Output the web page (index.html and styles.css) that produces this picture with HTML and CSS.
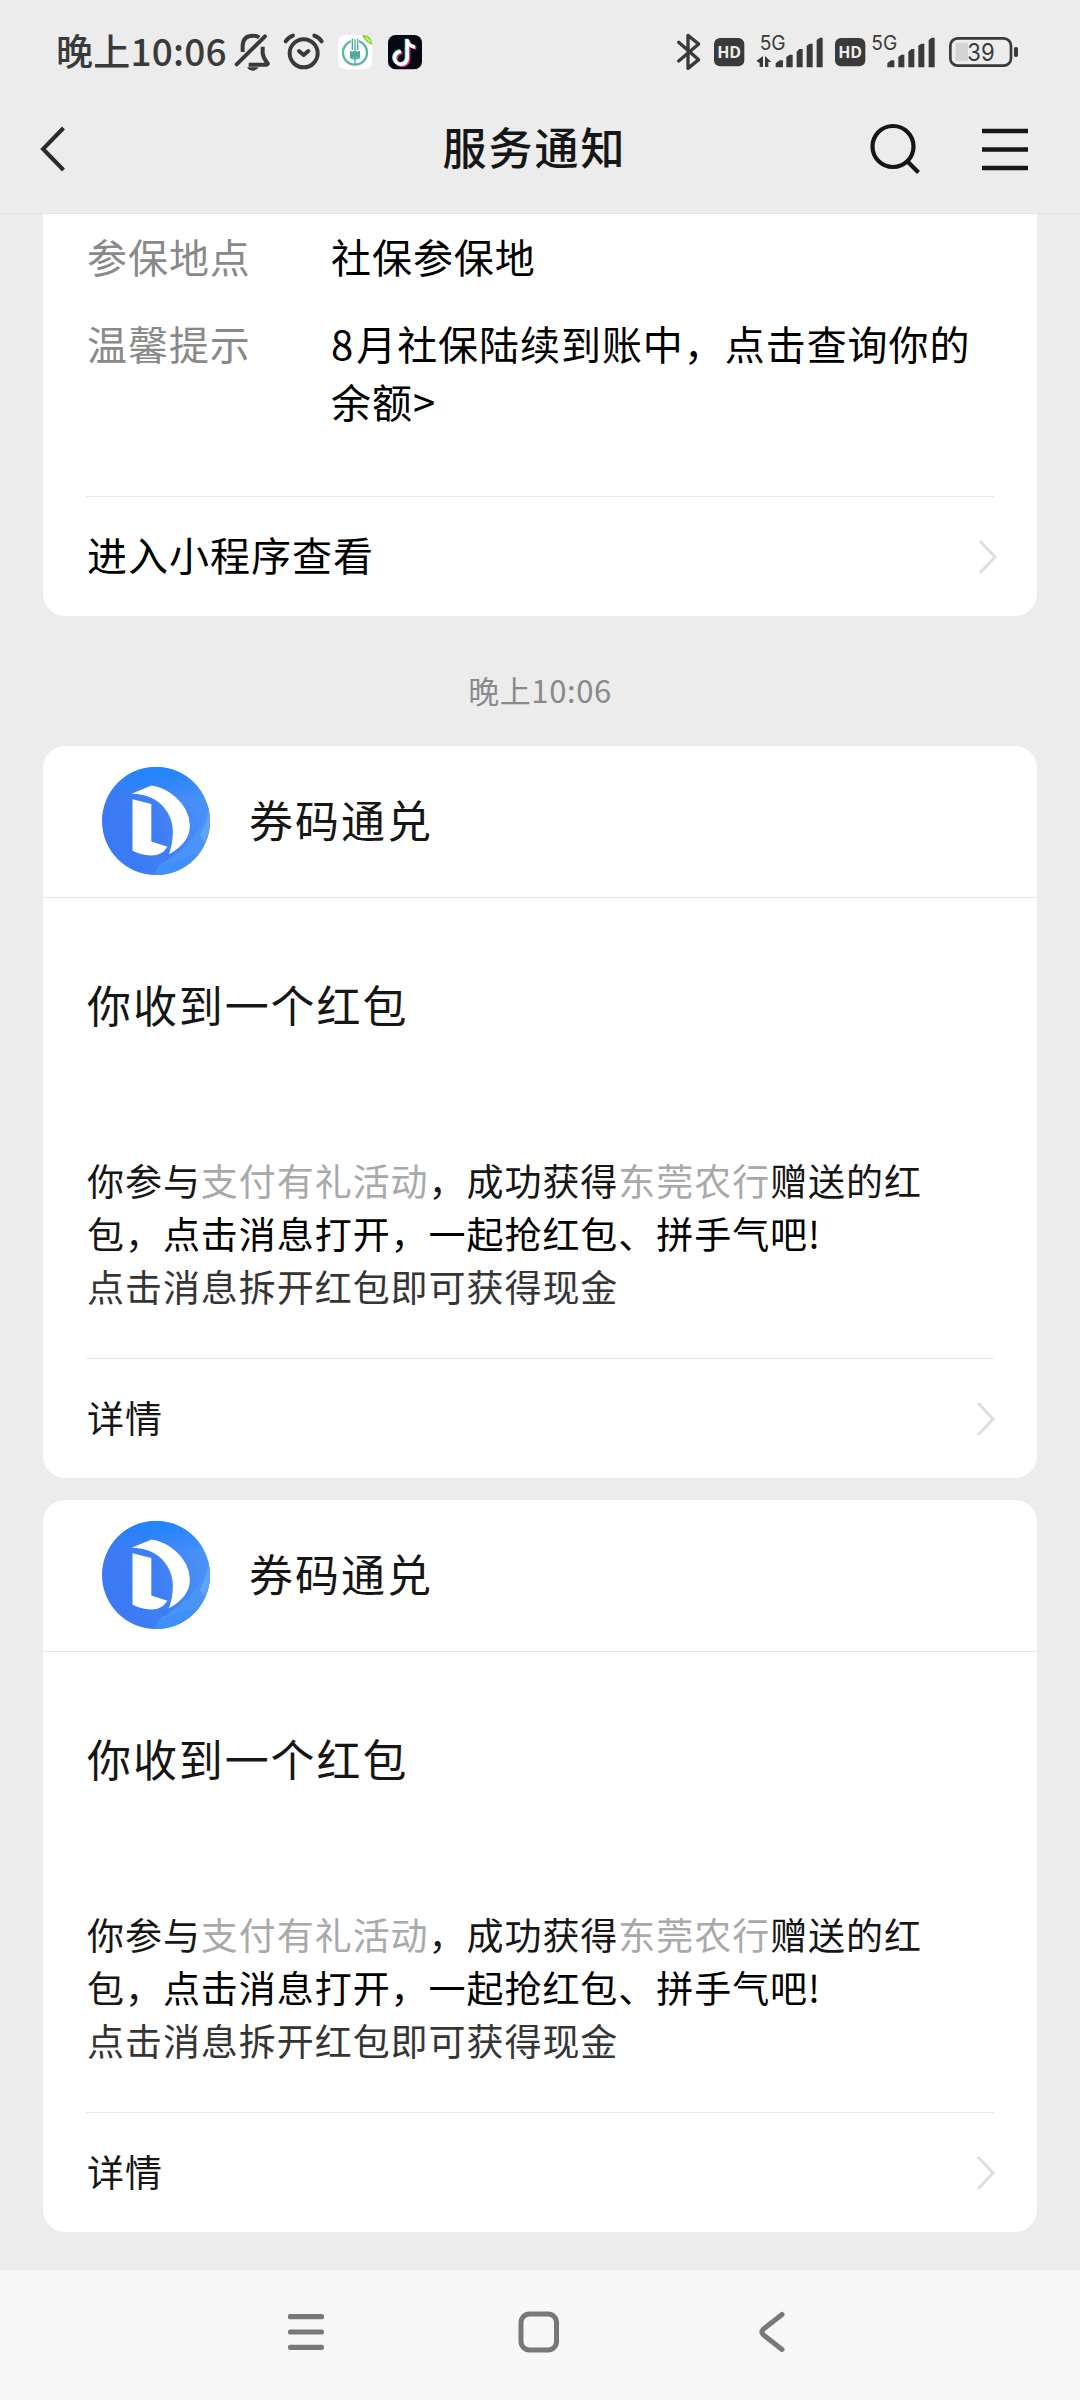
FILE: index.html
```html
<!DOCTYPE html>
<html lang="zh-CN">
<head>
<meta charset="utf-8">
<title>服务通知</title>
<link rel="stylesheet" href="styles.css">
</head>
<body>
<svg class="defs" width="0" height="0" aria-hidden="true">
  <defs>
    <linearGradient id="logo-bg" x1="0" y1="0.6" x2="1" y2="0.3">
      <stop offset="0" stop-color="#3b78f6"/><stop offset="0.5" stop-color="#3f7ff5"/><stop offset="1" stop-color="#4a94f8"/>
    </linearGradient>
    <linearGradient id="logo-top" x1="0" y1="0" x2="0" y2="1">
      <stop offset="0" stop-color="#1f85fd"/><stop offset="1" stop-color="#1f85fd" stop-opacity="0"/>
    </linearGradient>
    <clipPath id="logo-clip"><circle cx="197" cy="197" r="161"/></clipPath>
    <symbol id="logo" viewBox="36 36 322 322">
      <g clip-path="url(#logo-clip)">
        <rect x="36" y="36" width="322" height="322" fill="url(#logo-bg)"/>
        <rect x="36" y="36" width="322" height="95" fill="url(#logo-top)"/>
        <path d="M358 130Q340 255 205 330L190 360H358Z" fill="#4a94f9"/>
        <path d="M358 140Q350 200 328 240L342 262L370 190Z" fill="#62a3fa"/>
        <path d="M205 330L190 360H300L330 290Q270 310 205 330Z" fill="#3a8dfc" opacity=".6"/>
      </g>
      <path d="M124 116Q186 116 222 158Q262 206 239 286L236 296Q300 260 298 208Q295 160 256 126Q225 98 184 91Z" fill="#fff"/>
      <path d="M127 132L183 146V258L231 274Q215 301 182 300Q150 298 127 286Z" fill="#fff"/>
    </symbol>
    <symbol id="chevron" viewBox="0 0 20 36">
      <path d="M2 2L17 18L2 34" fill="none" stroke="#dedede" stroke-width="3"/>
    </symbol>
  </defs>
</svg>

<header class="top">
  <div class="status">
    <span class="clock">晚上10:06</span>
    <svg class="status-left" width="200" height="52" viewBox="0 0 600 156">
      <g fill="none" stroke="#3a3a3a" stroke-width="12" stroke-linecap="round" stroke-linejoin="round">
        <path d="M20 115L105 31"/>
        <path d="M38 78V58Q40 28 70 29Q80 29 88 34" stroke-linecap="butt"/>
        <path d="M98 62V82Q100 97 112 111Q116 115 109 116H56" stroke-linecap="butt"/>
        <circle cx="221" cy="82" r="42"/>
        <path d="M207 75L221 87L235 75M167 46Q175 34 189 29M253 29Q267 34 275 46"/>
      </g>
      <path d="M51 124H86Q80 134 68 134Q57 134 51 124Z" fill="#3a3a3a"/>
      <rect x="324" y="27" width="102" height="103" rx="22" fill="#fff"/>
      <circle cx="375" cy="80" r="36" fill="none" stroke="#5ab5a8" stroke-width="7"/>
      <rect x="363" y="36" width="24" height="36" fill="#fff"/>
      <path d="M367 38V72M383 38V72M362 75V94Q364 98 375 98Q386 98 388 94V75M375 40V118" fill="none" stroke="#4bada0" stroke-width="4"/>
      <path d="M362 76H388V95H362Z" fill="#4bada0"/>
      <path d="M396 27Q425 24 427 56Q408 53 396 27Z" fill="#8fd23f"/>
      <path d="M408 35L420 47" stroke="#d9ef8b" stroke-width="5"/>
      <rect x="474" y="27" width="102" height="103" rx="23" fill="#070914"/>
      <g fill="none" stroke-width="10">
        <path d="M532 40V96A19 19 0 1 1 513 77M532 44Q536 60 555 63" stroke="#5ee7df" transform="translate(-3 -2)"/>
        <path d="M532 40V96A19 19 0 1 1 513 77M532 44Q536 60 555 63" stroke="#f0416c" transform="translate(4 3)"/>
        <path d="M532 40V96A19 19 0 1 1 513 77M532 44Q536 60 555 63" stroke="#fff"/>
      </g>
    </svg>
    <svg class="status-right" width="160" height="52" viewBox="0 0 480 156">
      <path d="M26 49L86 101L54 127V28L86 54L26 105" fill="none" stroke="#3a3a3a" stroke-width="10" stroke-linecap="round" stroke-linejoin="round"/>
      <rect x="132" y="36" width="91" height="85" rx="18" fill="#3a3a3a"/>
      <text class="hd" x="177.500" y="95" textLength="72" lengthAdjust="spacingAndGlyphs" text-anchor="middle">HD</text>
      <text class="gen" x="269" y="71" textLength="78" lengthAdjust="spacingAndGlyphs">5G</text>
      <path d="M279 90V123H269V111L259 105ZM285 123V90L304 108H295V123Z" fill="#3a3a3a"/>
      <path d="M317 124V112L329 103H339V124ZM349 124V93L359 86H368V124ZM380 124V77L388 69H398V124ZM410 124V59L419 53H428V124ZM440 124V42L450 35H458V124Z" fill="#3a3a3a"/>
    </svg>
    <svg width="200" height="52" viewBox="0 0 600 156">
      <rect x="15" y="36" width="91" height="85" rx="18" fill="#3a3a3a"/>
      <text class="hd" x="60.500" y="95" textLength="72" lengthAdjust="spacingAndGlyphs" text-anchor="middle">HD</text>
      <text class="gen" x="124" y="71" textLength="78" lengthAdjust="spacingAndGlyphs">5G</text>
      <path d="M172 124V112L183 103H193V124ZM205 124V93L214 86H223V124ZM235 124V77L244 69H253V124ZM265 124V59L274 53H283V124ZM296 124V42L305 35H314V124Z" fill="#3a3a3a"/>
      <rect x="377" y="50" width="37" height="55" rx="5" fill="#d4d4d4"/>
      <rect x="361" y="37" width="182" height="82" rx="22" fill="none" stroke="#3a3a3a" stroke-width="8"/>
      <rect x="552" y="63" width="12" height="30" rx="5" fill="#3a3a3a"/>
      <text class="pct" x="412" y="104" textLength="82" lengthAdjust="spacingAndGlyphs">39</text>
    </svg>
  </div>
  <div class="titlebar">
    <svg class="back" width="28" height="50" viewBox="0 0 28 50"><path d="M24.500 4L4 25L24.500 46" fill="none" stroke="#2b2b2b" stroke-width="4"/></svg>
    <h1>服务通知</h1>
    <svg class="tools" width="162" height="56" viewBox="868 120 162 56">
      <g fill="none" stroke="#161616" stroke-width="4.200">
        <circle cx="893" cy="146.500" r="20.500"/><path d="M907.500 161.500L918.500 172.500"/>
        <path d="M982 131H1028M982 149.500H1028M982 168H1028" stroke-width="4.500"/>
      </g>
    </svg>
  </div>
</header>

<main>
  <section class="card card-first">
    <dl class="facts">
      <dt>参保地点</dt><dd>社保参保地</dd>
      <dt>温馨提示</dt><dd><span class="num">8</span>月社保陆续到账中，点击查询你的<br>余额<span class="gt">&gt;</span></dd>
    </dl>
    <div class="more more-large"><span>进入小程序查看</span><svg width="20" height="36"><use href="#chevron"/></svg></div>
  </section>

  <time>晚上10:06</time>

  <section class="card">
    <div class="sender"><svg width="108" height="108"><use href="#logo"/></svg><span>券码通兑</span></div>
    <h2>你收到一个红包</h2>
    <p class="body"><span class="ink">你参与</span><span class="muted">支付有礼活动</span><span class="ink">，成功获得</span><span class="muted">东莞农行</span><span class="ink">赠送的红<br>包，</span>点击消息打开，一起抢红包、拼手气吧!<br><span class="soft">点击消息拆开红包即可获得现金</span></p>
    <div class="more"><span>详情</span><svg width="20" height="36"><use href="#chevron"/></svg></div>
  </section>

  <section class="card">
    <div class="sender"><svg width="108" height="108"><use href="#logo"/></svg><span>券码通兑</span></div>
    <h2>你收到一个红包</h2>
    <p class="body"><span class="ink">你参与</span><span class="muted">支付有礼活动</span><span class="ink">，成功获得</span><span class="muted">东莞农行</span><span class="ink">赠送的红<br>包，</span>点击消息打开，一起抢红包、拼手气吧!<br><span class="soft">点击消息拆开红包即可获得现金</span></p>
    <div class="more"><span>详情</span><svg width="20" height="36"><use href="#chevron"/></svg></div>
  </section>
</main>

<nav class="navbar">
  <svg width="46" height="50" viewBox="0 0 46 50"><path d="M8.500 9.700H39.500M8.500 25H39.500M8.500 40.300H39.500" fill="none" stroke="#787878" stroke-width="5.200" stroke-linecap="round"/></svg>
  <svg width="46" height="50" viewBox="0 0 46 50"><rect x="5" y="7" width="35.500" height="36" rx="8.500" fill="none" stroke="#787878" stroke-width="5"/></svg>
  <svg width="46" height="50" viewBox="0 0 46 50"><path d="M33 7.500L14.500 22Q11.500 25 14.500 28L33 42.500" fill="none" stroke="#787878" stroke-width="5" stroke-linecap="round"/></svg>
</nav>
</body>
</html>
```

FILE: styles.css
```css
* { box-sizing: border-box; margin: 0; padding: 0; }

body {
  width: 1080px;
  height: 2400px;
  display: flex;
  flex-direction: column;
  overflow: hidden;
  background: #ececec;
  color: #000;
  font-family: "Noto Sans CJK SC", "Noto Sans", sans-serif;
  white-space: nowrap;
}

svg { display: block; flex: none; }
.defs { position: absolute; }

.top { height: 214px; border-bottom: 1px solid #e4e4e4; }

.status {
  height: 78px;
  padding: 26px 50px 0 56px;
  display: flex;
}
.clock {
  width: 174px;
  font-size: 37px;
  font-weight: 500;
  line-height: 48px;
  letter-spacing: 0.2px;
  color: #3a3a3a;
}
.status-right { margin-left: auto; }
.hd { font: 700 46px "Open Sans", sans-serif; fill: #ececec; }
.gen { font: 400 60px "Inter", sans-serif; fill: #3a3a3a; }
.pct { font: 400 72px "Inter", sans-serif; fill: #3a3a3a; }

.titlebar {
  height: 136px;
  padding: 42px 50px 0 39px;
  display: grid;
  grid-template-columns: 162px 1fr 162px;
}
.back { margin-top: 4px; }
h1 {
  text-align: center;
  font-size: 44px;
  font-weight: 500;
  line-height: 52px;
  letter-spacing: 2px;
  color: #161616;
}

main { height: 2056px; padding: 0 43px; }

.card {
  height: 732px;
  margin-bottom: 22px;
  border-radius: 22px;
  background: #fff;
  display: flex;
  flex-direction: column;
}
.card-first {
  height: 402px;
  margin-bottom: 0;
  border-radius: 0 0 22px 22px;
}

.facts {
  height: 282px;
  padding: 13px 44px 0;
  display: grid;
  grid-template-columns: 244px 1fr;
  grid-template-rows: 87px 1fr;
  font-size: 40px;
  line-height: 58px;
  letter-spacing: 0.95px;
}
dt { color: #898989; }
.num { letter-spacing: 3px; }
.gt { letter-spacing: 0; }

.more {
  margin: 0 43px;
  height: 120px;
  border-top: 1px solid #e6e6e6;
  display: flex;
  align-items: center;
  justify-content: space-between;
  padding-left: 1px;
  font-size: 37px;
  letter-spacing: 1px;
  color: #161616;
}
.more span { line-height: 60px; padding-bottom: 4px; }
.more svg { margin-right: -2px; }
.more-large { font-size: 40px; color: #000; }
.more-large span { padding-bottom: 6px; }
.more-large svg { margin-right: -4px; }

time {
  display: block;
  height: 130px;
  padding-top: 44px;
  text-align: center;
  font-size: 31px;
  line-height: 60px;
  letter-spacing: 0.6px;
  color: #898989;
}

.sender {
  height: 152px;
  padding: 0 59px;
  border-bottom: 1px solid #e6e6e6;
  display: flex;
  align-items: center;
  gap: 39px;
  font-size: 44px;
  letter-spacing: 2px;
  color: #161616;
}
.sender svg { margin-bottom: 2px; }
.sender span { line-height: 60px; padding-bottom: 6px; }

h2 {
  padding: 74px 44px 0;
  height: 256px;
  font-size: 44px;
  font-weight: 400;
  line-height: 64px;
  letter-spacing: 1.9px;
  color: #161616;
}

.body {
  height: 204px;
  padding: 0 44px;
  font-size: 37px;
  line-height: 53px;
  letter-spacing: 0.95px;
}
.ink { color: #161616; }
.muted { color: #a9a9a9; }
.soft { color: #353535; }

.navbar {
  height: 130px;
  background: #f7f7f7;
  display: flex;
  justify-content: space-between;
  padding: 37px 285px 0 282px;
}
```
